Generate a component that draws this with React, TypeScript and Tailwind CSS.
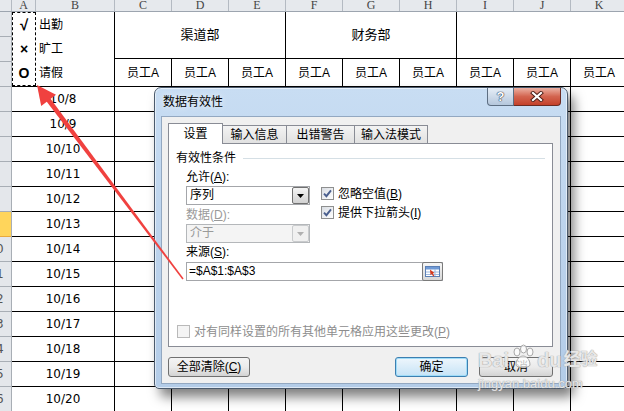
import React from "react";

const colLetters = ["C", "D", "E", "F", "G", "H", "I", "J", "K"];
const dates = Array.from({ length: 13 }, (_, i) => `10/${8 + i}`);

function CheckBox({ checked, disabled }: { checked?: boolean; disabled?: boolean }) {
  return (
    <span
      className={`flex h-[13px] w-[13px] shrink-0 items-center justify-center border ${
        disabled
          ? "border-[#b9b9b9] bg-[#f4f4f4]"
          : "border-[#8e8f8f] bg-linear-to-br from-[#d9dde3] to-[#ffffff]"
      }`}
    >
      {checked && (
        <svg width="9" height="9" viewBox="0 0 9 9">
          <path d="M1 4.6 L3.4 7.2 L8 1.4" fill="none" stroke="#4a5f8e" strokeWidth="1.9" />
        </svg>
      )}
    </span>
  );
}

function Arrow({ color }: { color: string }) {
  return (
    <svg width="7" height="4" viewBox="0 0 7 4">
      <polygon points="0,0 7,0 3.5,4" fill={color} />
    </svg>
  );
}

function Combo({ value, disabled }: { value: string; disabled?: boolean }) {
  return (
    <div
      className={`flex h-[19px] w-[124px] items-stretch border ${
        disabled ? "border-[#b4b7ba] bg-[#f4f4f4]" : "border-[#a4a6aa] bg-white"
      }`}
    >
      <span
        className={`flex-1 pl-[3px] text-[12px] leading-[17px] ${
          disabled ? "text-[#9a9a9a]" : "text-black"
        }`}
      >
        {value}
      </span>
      <span
        className={`flex w-[17px] items-center justify-center rounded-[2px] border ${
          disabled
            ? "border-[#c9cbcd] bg-[#f0f0f0]"
            : "border-[#707070] bg-linear-to-b from-[#f4f4f4] to-[#d2d2d2]"
        }`}
      >
        <Arrow color={disabled ? "#b0b0b0" : "#000"} />
      </span>
    </div>
  );
}

function Btn({ label, primary, w }: { label: React.ReactNode; primary?: boolean; w: string }) {
  return (
    <div
      className={`flex h-[20px] ${w} items-center justify-center rounded-[3px] border text-[12px] leading-[14px] ${
        primary
          ? "border-[#3c7fb1] bg-linear-to-b from-[#eef6fc] to-[#c6e3f6] shadow-[inset_0_0_0_1px_#9fdcf8]"
          : "border-[#707070] bg-linear-to-b from-[#f4f4f4] via-[#ebebeb] to-[#d3d3d3]"
      }`}
    >
      {label}
    </div>
  );
}

export default function App() {
  return (
    <div className="relative h-[411px] w-[624px] overflow-hidden bg-white font-['Liberation_Sans','Noto_Sans_CJK_SC',sans-serif] text-black">
      {/* column headers */}
      <div className="flex h-[12px] border-b border-[#9da5af] bg-[#e6e9ed]">
        <div className="w-[12px] shrink-0 border-r border-[#b4bac2]" />
        <div className="flex w-[24px] shrink-0 justify-center border-r border-[#b4bac2] font-['Liberation_Serif',serif] text-[12px] leading-[10px] text-[#444]">
          A
        </div>
        <div className="flex w-[79px] shrink-0 justify-center border-r border-[#b4bac2] font-['Liberation_Serif',serif] text-[12px] leading-[10px] text-[#444]">
          B
        </div>
        {colLetters.map((c) => (
          <div
            key={c}
            className="flex w-[57px] shrink-0 justify-center border-r border-[#b4bac2] font-['Liberation_Serif',serif] text-[12px] leading-[10px] text-[#444]"
          >
            {c}
          </div>
        ))}
      </div>

      <div className="flex">
        {/* row headers */}
        <div className="w-[12px] shrink-0 border-r border-[#a8aeb5] bg-[#e4e7eb]">
          {[1, 2, 3].map((n) => (
            <div key={n} className="h-[25px] border-b border-[#a8aeb5]" />
          ))}
          {dates.map((d, i) => {
            const n = i + 4;
            const sel = n === 9;
            return (
              <div
                key={d}
                className={`flex h-[25px] items-center overflow-hidden border-b text-[12px] text-[#555] ${
                  sel ? "border-[#e8a93d] bg-[#ffd55b]" : "border-[#a8aeb5]"
                }`}
              >
                {n >= 10 && <span className="-ml-[4px] font-['DejaVu_Sans',sans-serif] leading-none">{n % 10}</span>}
              </div>
            );
          })}
        </div>

        {/* cells */}
        <div className="flex-1">
          <div className="flex h-[75px] border-b border-black">
            <div className="flex w-[103px] shrink-0 border-r border-black">
              <div className="flex w-[24px] flex-col border border-dashed border-black">
                <span className="flex h-[24px] items-center justify-center text-[15px] font-bold">√</span>
                <span className="flex h-[24px] items-center justify-center text-[14px] font-bold">×</span>
                <span className="flex h-[24px] items-center justify-center text-[14px] font-bold">O</span>
              </div>
              <div className="flex flex-col pl-[3px] pt-[1px] text-[12px]">
                <span className="flex h-[24px] items-center">出勤</span>
                <span className="flex h-[24px] items-center">旷工</span>
                <span className="flex h-[24px] items-center">请假</span>
              </div>
            </div>
            <div className="flex flex-1 flex-col">
              <div className="flex h-[47px] border-b border-black text-[13px]">
                <div className="flex w-[171px] shrink-0 items-center justify-center border-r border-black">渠道部</div>
                <div className="flex w-[171px] shrink-0 items-center justify-center border-r border-black">财务部</div>
                <div className="flex-1" />
              </div>
              <div className="flex flex-1">
                {colLetters.map((c) => (
                  <div
                    key={c}
                    className="flex w-[57px] shrink-0 items-center justify-center border-r border-black text-[12px]"
                  >
                    员工A
                  </div>
                ))}
              </div>
            </div>
          </div>
          {dates.map((d) => (
            <div key={d} className="flex h-[25px] border-b border-black">
              <div className="flex w-[103px] shrink-0 items-center justify-center border-r border-black font-['DejaVu_Sans',sans-serif] text-[12px]">
                {d}
              </div>
              {colLetters.map((c) => (
                <div key={c} className="w-[57px] shrink-0 border-r border-black" />
              ))}
            </div>
          ))}
        </div>
      </div>

      {/* data validation dialog */}
      <div className="absolute left-[154px] top-[87px] flex h-[302px] w-[414px] flex-col rounded-t-[7px] rounded-b-[5px] border border-[#4b5a6c] bg-linear-to-b from-[#c8ddf3] via-[#bcd3ec] to-[#b3cce8] shadow-[inset_0_0_0_1px_rgba(255,255,255,0.55),6px_8px_12px_rgba(0,0,0,0.5)]">
        <div className="flex h-[28px] shrink-0">
          <span className="self-center pl-[8px] text-[12px] leading-[14px] [text-shadow:0_0_6px_#fff]">数据有效性</span>
          <div className="ml-auto mr-[6px] flex self-start">
            <div className="flex h-[18px] w-[27px] items-center justify-center rounded-bl-[4px] border border-t-0 border-[#5d6e82] bg-linear-to-b from-[#e6eef7] to-[#b5c7dc] text-[13px] font-bold leading-none text-white [text-shadow:0_0_1px_#2c3b4f,0_0_1px_#2c3b4f,0_0_1px_#2c3b4f]">
              ?
            </div>
            <div className="flex h-[18px] w-[47px] items-center justify-center rounded-br-[4px] border border-l-0 border-t-0 border-[#6b2b22] bg-linear-to-b from-[#eab0a3] via-[#d3644f] to-[#c4402a]">
              <svg width="14" height="11" viewBox="0 0 14 11">
                <path d="M3 2 L11 9 M11 2 L3 9" stroke="#4a1c15" strokeWidth="4" strokeLinecap="square" />
                <path d="M3 2 L11 9 M11 2 L3 9" stroke="#fff" strokeWidth="2.2" strokeLinecap="square" />
              </svg>
            </div>
          </div>
        </div>

        <div className="mx-[6px] mb-[6px] flex flex-1 flex-col border border-[#93a8c1] bg-[#f0f0f0] p-[6px] text-[12px]">
          {/* tabs */}
          <div className="flex h-[20px] items-end">
            <div className="relative z-10 -mb-px flex h-[21px] w-[55px] items-center justify-center border border-b-0 border-[#898c95] bg-white leading-[14px]">
              设置
            </div>
            <div className="flex h-[18px] w-[64px] items-center justify-center border border-b-0 border-l-0 border-[#898c95] bg-linear-to-b from-[#f3f3f3] to-[#e1e1e1] leading-[14px]">
              输入信息
            </div>
            <div className="flex h-[18px] w-[68px] items-center justify-center border border-b-0 border-l-0 border-[#898c95] bg-linear-to-b from-[#f3f3f3] to-[#e1e1e1] leading-[14px]">
              出错警告
            </div>
            <div className="flex h-[18px] w-[73px] items-center justify-center border border-b-0 border-l-0 border-[#898c95] bg-linear-to-b from-[#f3f3f3] to-[#e1e1e1] leading-[14px]">
              输入法模式
            </div>
          </div>

          {/* tab panel */}
          <div className="h-[204px] w-[385px] border border-[#898c95] bg-white">
            <div className="mt-[7px] flex h-[14px] items-center pl-[7px] pr-[7px]">
              <span className="leading-[14px]">有效性条件</span>
              <span className="ml-[7px] h-px flex-1 bg-[#d5dfe5]" />
            </div>

            <div className="pl-[17px]">
              <div className="mt-[5px] flex">
                <div className="flex w-[124px] flex-col">
                  <span className="h-[14px] leading-[14px]">
                    允许(<span className="underline">A</span>):
                  </span>
                  <div className="mt-[2px]">
                    <Combo value="序列" />
                  </div>
                  <span className="mt-[3px] h-[14px] leading-[14px] text-[#9a9a9a]">
                    数据(<span className="underline">D</span>):
                  </span>
                  <div className="mt-[2px]">
                    <Combo value="介于" disabled />
                  </div>
                </div>
                <div className="ml-[11px] flex flex-col gap-[6px] pt-[17px]">
                  <div className="flex h-[13px] items-center gap-[4px]">
                    <CheckBox checked />
                    <span className="leading-[14px]">
                      忽略空值(<span className="underline">B</span>)
                    </span>
                  </div>
                  <div className="flex h-[13px] items-center gap-[4px]">
                    <CheckBox checked />
                    <span className="leading-[14px]">
                      提供下拉箭头(<span className="underline">I</span>)
                    </span>
                  </div>
                </div>
              </div>

              <span className="mt-[2px] block h-[14px] leading-[14px]">
                来源(<span className="underline">S</span>):
              </span>
              <div className="mt-[3px] flex h-[19px] w-[257px] items-stretch border border-[#a4a6aa] bg-white">
                <span className="flex-1 pl-[2px] leading-[17px]">=$A$1:$A$3</span>
                <span className="-my-px -mr-px flex w-[21px] items-center justify-center rounded-[2px] border border-[#7a7a7a] bg-linear-to-b from-[#f6f6f6] to-[#d8d8d8]">
                  <svg width="15" height="11" viewBox="0 0 15 11">
                    <rect x="0.5" y="0.5" width="14" height="10" fill="#fff" stroke="#5b7fb5" />
                    <rect x="1" y="1" width="13" height="2.5" fill="#6f9ad6" />
                    <line x1="1" y1="6" x2="14" y2="6" stroke="#9db8de" />
                    <line x1="1" y1="8.5" x2="14" y2="8.5" stroke="#9db8de" />
                    <line x1="10" y1="3" x2="10" y2="10" stroke="#9db8de" />
                    <path d="M5 3.5 L9.5 7 L7.8 7.4 L9.3 9.8 L8.2 10.4 L6.8 8 L5.5 9.2 Z" fill="#d6391c" />
                  </svg>
                </span>
              </div>
            </div>

            <div className="ml-[8px] mt-[44px] flex h-[13px] items-center gap-[4px] text-[#8d8d8d]">
              <CheckBox disabled />
              <span className="leading-[14px]">
                对有同样设置的所有其他单元格应用这些更改(<span className="underline">P</span>)
              </span>
            </div>
          </div>

          {/* buttons */}
          <div className="mt-[10px] flex w-[385px]">
            <Btn
              w="w-[82px]"
              label={
                <>
                  全部清除(<span className="underline">C</span>)
                </>
              }
            />
            <div className="ml-auto flex gap-[11px]">
              <Btn w="w-[73px]" primary label="确定" />
              <Btn w="w-[74px]" label="取消" />
            </div>
          </div>
        </div>
      </div>

      {/* red arrow */}
      <svg className="pointer-events-none absolute left-0 top-0" width="624" height="411" viewBox="0 0 624 411">
        <polygon points="46.2,101 50.2,98.2 183.6,278.6 182.4,279.4" fill="#f0413f" />
        <polygon points="37,85 41.2,106 56,94.8" fill="#f0413f" />
      </svg>

      {/* watermark */}
      <div className="pointer-events-none absolute left-[478px] top-[344px] flex flex-col text-white/75 [text-shadow:0_0_1px_#a0a0a0,0_0_1px_#a0a0a0]">
        <div className="flex items-end">
          <span className="font-['Liberation_Sans',sans-serif] text-[20px] font-bold leading-[22px]">Bai</span>
          <svg width="26" height="26" viewBox="0 0 26 26" className="mx-[1px] mb-[1px]">
            <g fill="rgba(255,255,255,0.75)" stroke="#a8a8a8" strokeWidth="1">
              <ellipse cx="7" cy="8" rx="3" ry="4" />
              <ellipse cx="13.5" cy="5" rx="3" ry="4" />
              <ellipse cx="20" cy="8" rx="3" ry="4" />
              <path d="M6 21 C6 15 10 12 13 12 C16 12 20 15 20 21 C20 24 6 24 6 21 Z" />
            </g>
          </svg>
          <span className="font-['Liberation_Sans',sans-serif] text-[20px] font-bold leading-[22px]">du</span>
          <span className="ml-[2px] text-[17px] font-bold leading-[22px]">经验</span>
        </div>
        <span className="mt-[6px] font-['Liberation_Sans',sans-serif] text-[13px] leading-[13px]">jingyan.baidu.com</span>
      </div>
    </div>
  );
}
